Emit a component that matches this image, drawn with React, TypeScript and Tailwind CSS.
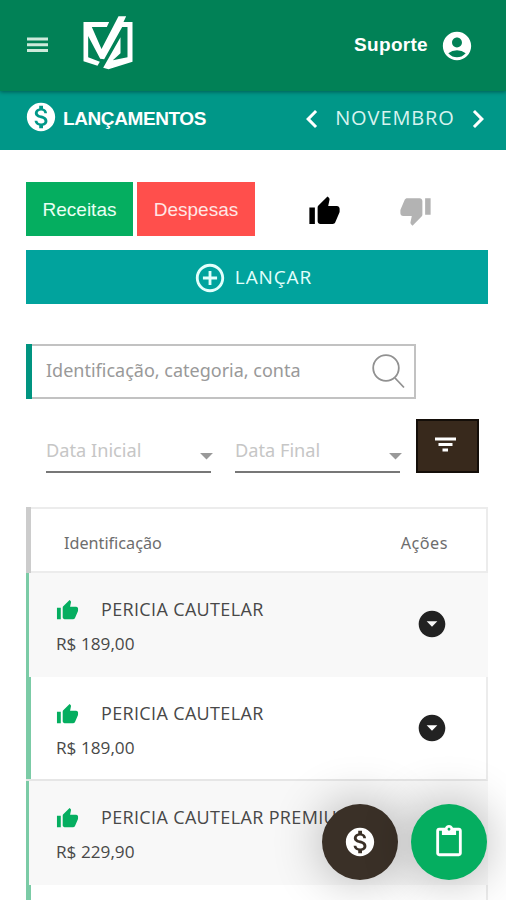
import {
  MdAccountCircle,
  MdAddCircleOutline,
  MdArrowDropDown,
  MdArrowDropDownCircle,
  MdChevronLeft,
  MdChevronRight,
  MdContentPaste,
  MdMonetizationOn,
  MdThumbDown,
  MdThumbUp,
} from 'react-icons/md';

const entries = [
  { name: 'PERICIA CAUTELAR', value: 'R$ 189,00' },
  { name: 'PERICIA CAUTELAR', value: 'R$ 189,00' },
  { name: 'PERICIA CAUTELAR PREMIUM', value: 'R$ 229,90' },
];

function Logo() {
  return (
    <svg width="50" height="54" viewBox="249 48 149 162" fill="#fff">
      <path d="M250 66H327L320 81H275L304 147L355 49H378L370 66H397V185L325 208L309 203L361 112V160L338 181L382 172V81H366L312 178L300 176L264 108V172L299 185L292 197L250 184Z" />
    </svg>
  );
}

function MenuIcon() {
  return (
    <svg width="21" height="16" viewBox="0 0 21 16" fill="#cdeadb">
      <path d="M0 .5H21V3.500H0ZM0 6.300H21V9.300H0ZM0 12.100H21V15.100H0Z" />
    </svg>
  );
}

function FilterIcon() {
  return (
    <svg width="21" height="15" viewBox="0 0 21 15" fill="#fff">
      <path d="M0 .5H21V3.500H0ZM3.500 6H17.500V9H3.500ZM7.500 11.500H13V14.500H7.500Z" />
    </svg>
  );
}

function Header() {
  return (
    <header className="relative z-10 flex h-[91px] items-center bg-[#018156] pl-[27px] pr-8 text-white shadow-[0_1px_4px_rgba(0,0,0,0.4)]">
      <div className="mt-[-2px]">
        <MenuIcon />
      </div>
      <div className="ml-[35px] mt-[-5px]">
        <Logo />
      </div>
      <span className="ml-auto mt-[-1px] text-[19px] font-bold leading-6 tracking-[0.3px]">Suporte</span>
      <MdAccountCircle size={34} className="ml-3 mt-px" />
    </header>
  );
}

function MonthBar() {
  return (
    <div className="flex h-[59px] items-center bg-[#009788] pb-[3px] pl-6 pr-[10px] text-white">
      <MdMonetizationOn size={34} className="mt-[-4px]" />
      <h1 className="ml-[5px] text-[19px] font-bold leading-6 tracking-[-0.4px]">LANÇAMENTOS</h1>
      <MdChevronLeft size={36} className="ml-auto" />
      <span className="mx-[5px] mt-[-2px] w-[120px] whitespace-nowrap text-center font-['Open_Sans',sans-serif] text-[20px] leading-6 tracking-[0.9px] text-[#d7f3ef]">
        NOVEMBRO
      </span>
      <MdChevronRight size={36} />
    </div>
  );
}

function DateField({ label }: { label: string }) {
  return (
    <div className="flex h-[42px] w-[165px] items-center justify-between border-b-2 border-[#777] font-['Noto_Sans',sans-serif] text-[18.200px] text-[#c6c6c6]">
      <span className="mt-[-1px] whitespace-nowrap">{label}</span>
      <MdArrowDropDown size={31} className="mr-[-11px] mt-2 text-[#999]" />
    </div>
  );
}

function Filters() {
  return (
    <div className="mt-10">
      <div className="flex h-[55px] w-[390px] items-center border-2 border-l-0 border-[#c2c2c2] pr-[9px]">
        <div className="my-[-2px] h-[55px] w-[6px] bg-[#009480]" />
        <span className="ml-[14px] mt-[-2px] whitespace-nowrap font-['Noto_Sans',sans-serif] text-[18px] text-[#999]">
          Identificação, categoria, conta
        </span>
        <svg className="ml-auto mt-[-1px]" width="34" height="36" viewBox="0 0 34 36" fill="none" stroke="#919191" strokeWidth="1.800">
          <circle cx="15" cy="15" r="12.800" />
          <path d="M24 25L33 34.500" />
        </svg>
      </div>
      <div className="mt-5 flex items-end pl-5">
        <DateField label="Data Inicial" />
        <div className="ml-6">
          <DateField label="Data Final" />
        </div>
        <button className="ml-4 flex h-[54px] w-[63px] items-center justify-center border-2 border-[#140e09] bg-[#38291c] pb-1 pr-[5px]">
          <FilterIcon />
        </button>
      </div>
    </div>
  );
}

function EntryRow({ name, value, striped }: { name: string; value: string; striped: boolean }) {
  return (
    <li className={striped ? 'flex h-[104px] bg-[#f8f8f8]' : 'flex h-[104px] border-b-2 border-r-2 border-b-[#e6e6e6] border-r-[#ececec] bg-white'}>
      <div className={striped ? 'mr-[27px] h-full w-[3px] bg-[#7bcba6]' : 'mr-[25px] h-full w-[5px] bg-[#7bcba6]'} />
      <div className="pt-6">
        <div className="flex h-6 items-center">
          <MdThumbUp size={23} className="mt-[2px] text-[#05ae60]" />
          <span className="ml-[22px] whitespace-nowrap font-['Open_Sans',sans-serif] text-[18px] leading-6 tracking-[0.35px] text-[#484848]">
            {name}
          </span>
        </div>
        <p className="mt-[11px] font-['Open_Sans',sans-serif] text-[17.200px] leading-6 text-[#484848]">{value}</p>
      </div>
      <MdArrowDropDownCircle
        size={32}
        className={striped ? 'ml-auto mr-[40px] mt-[35px] text-[#222]' : 'ml-auto mr-[38px] mt-[35px] text-[#222]'}
      />
    </li>
  );
}

export default function App() {
  return (
    <div className="relative h-[900px] w-[506px] overflow-hidden bg-white font-['Liberation_Sans',Arial,sans-serif]">
      <Header />
      <MonthBar />

      <main className="pl-[26px] pr-[18px] pt-8">
        <div className="flex h-[54px] items-center">
          <button className="h-[54px] w-[107px] bg-[#05ae60] pt-[2px] text-[19px] text-[#eafff3]">Receitas</button>
          <button className="ml-1 h-[54px] w-[118px] bg-[#ff4f4c] pt-[2px] text-[19px] text-[#ffe6e4]">Despesas</button>
          <MdThumbUp size={33} className="ml-[53px] mt-1 text-black" />
          <MdThumbDown size={33} className="ml-[58px] mt-[3px] text-[#b3b3b3]" />
        </div>

        <button className="mt-[14px] flex h-[54px] w-full items-center justify-center bg-[#01a39d] pr-[9px] text-[#e2fffc]">
          <MdAddCircleOutline size={34} className="mt-[2px]" />
          <span className="ml-2 font-['Open_Sans',sans-serif] text-[19px] leading-6 tracking-[0.9px]">LANÇAR</span>
        </button>

        <Filters />

        <section className="mt-[34px]">
          <div className="flex h-[66px] items-center border-2 border-l-0 border-[#ececec] font-['Noto_Sans',sans-serif] text-[16.200px] text-[#6d6d6d]">
            <div className="my-[-2px] h-[66px] w-[5px] bg-[#ccc]" />
            <span className="ml-[33px] mt-[6px]">Identificação</span>
            <span className="ml-auto mr-[38px] mt-[6px] tracking-[0.5px]">Ações</span>
          </div>
          <ul>
            {entries.map((entry, i) => (
              <EntryRow key={i} name={entry.name} value={entry.value} striped={i % 2 === 0} />
            ))}
          </ul>
          <div className="h-4 border-l-[5px] border-r-2 border-l-[#7bcba6] border-r-[#ececec]" />
        </section>
      </main>

      {/* Floating actions */}
      <div className="absolute left-[322px] top-[804px] flex gap-[13px] text-white">
        <button className="flex size-[76px] items-center justify-center rounded-full bg-[#3a3027] shadow-[0_0_50px_rgba(0,0,0,0.3)]">
          <MdMonetizationOn size={34} />
        </button>
        <button className="flex size-[76px] items-center justify-center rounded-full bg-[#05ae60] shadow-[0_0_50px_rgba(0,0,0,0.3)]">
          <MdContentPaste size={34} />
        </button>
      </div>
    </div>
  );
}
